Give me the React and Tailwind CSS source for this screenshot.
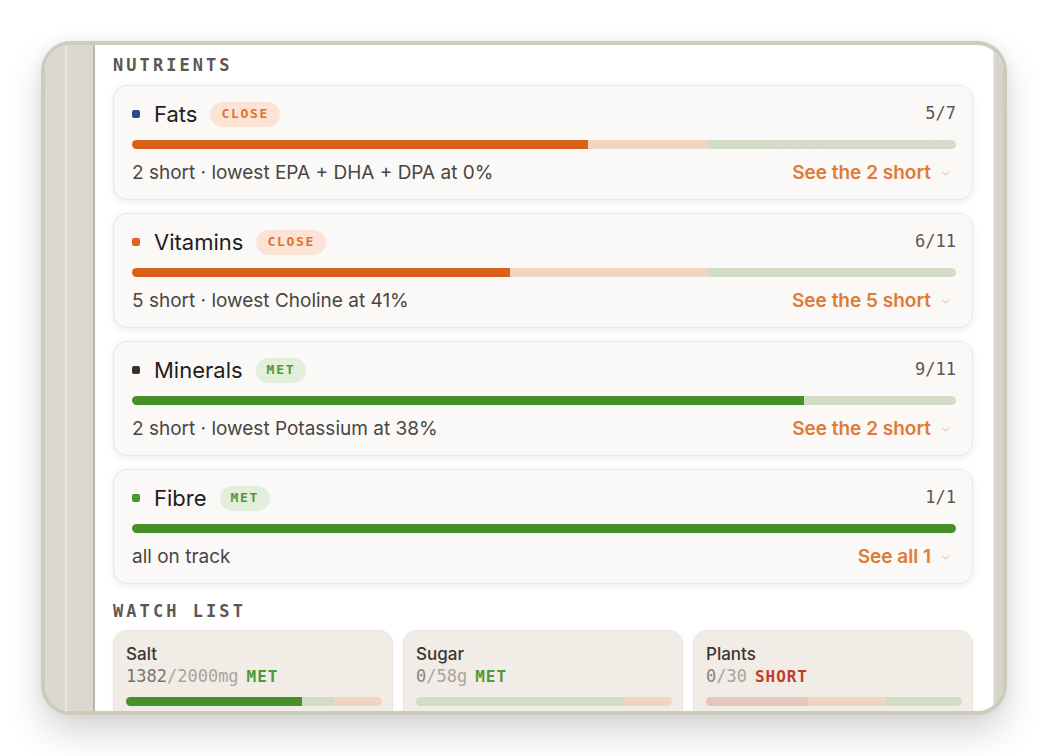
import { ChevronDown } from "lucide-react";

const SANS = "font-['Inter','Noto_Sans',sans-serif]";
const MONO = "font-['DejaVu_Sans_Mono',monospace]";

const ORANGE = "bg-[#d9621b]";
const PEACH = "bg-[#f0d5c3]";
const LGREEN = "bg-[#d3dcc6]";
const GREEN = "bg-[#46902a]";
const PINK = "bg-[#e5c5bf]";
const STRIPE =
  "bg-[repeating-linear-gradient(135deg,#d3dcc6_0px,#d3dcc6_3px,#dcd8d0_3px,#dcd8d0_6px)]";

const nutrients = [
  {
    name: "Fats",
    dot: "bg-[#2d4a8c]",
    badge: "CLOSE",
    count: "5/7",
    segs: [
      { w: 55.3, c: ORANGE },
      { w: 14.6, c: PEACH },
      { w: 7.9, c: LGREEN },
      { w: 22.2, c: STRIPE },
    ],
    note: "2 short · lowest EPA + DHA + DPA at 0%",
    link: "See the 2 short",
  },
  {
    name: "Vitamins",
    dot: "bg-[#e0621a]",
    badge: "CLOSE",
    count: "6/11",
    segs: [
      { w: 45.9, c: ORANGE },
      { w: 24.0, c: PEACH },
      { w: 30.1, c: LGREEN },
    ],
    note: "5 short · lowest Choline at 41%",
    link: "See the 5 short",
  },
  {
    name: "Minerals",
    dot: "bg-[#3a2f29]",
    badge: "MET",
    count: "9/11",
    segs: [
      { w: 81.6, c: GREEN },
      { w: 18.4, c: LGREEN },
    ],
    note: "2 short · lowest Potassium at 38%",
    link: "See the 2 short",
  },
  {
    name: "Fibre",
    dot: "bg-[#4a9a2c]",
    badge: "MET",
    count: "1/1",
    segs: [{ w: 100, c: GREEN }],
    note: "all on track",
    link: "See all 1",
  },
];

const watch = [
  {
    name: "Salt",
    val: "1382",
    rest: "/2000mg",
    status: "MET",
    statusCls: "text-[#4f9a36]",
    valCls: "text-[#7a746d]",
    segs: [
      { w: 68.75, c: GREEN },
      { w: 12.5, c: LGREEN },
      { w: 18.75, c: PEACH },
    ],
  },
  {
    name: "Sugar",
    val: "0",
    rest: "/58g",
    status: "MET",
    statusCls: "text-[#4f9a36]",
    valCls: "text-[#8a847d]",
    segs: [
      { w: 81.25, c: LGREEN },
      { w: 18.75, c: PEACH },
    ],
  },
  {
    name: "Plants",
    val: "0",
    rest: "/30",
    status: "SHORT",
    statusCls: "text-[#bf3b2c]",
    valCls: "text-[#8a847d]",
    segs: [
      { w: 39.8, c: PINK },
      { w: 30.5, c: PEACH },
      { w: 29.7, c: LGREEN },
    ],
  },
];

function Bar({ segs }) {
  return (
    <div className="flex h-[9px] w-full overflow-hidden rounded-full">
      {segs.map((s, i) => (
        <div key={i} className={`h-full ${s.c}`} style={{ width: `${s.w}%` }} />
      ))}
    </div>
  );
}

function Badge({ kind }) {
  const cls =
    kind === "MET"
      ? "bg-[#e3eedb] text-[#4f9a36]"
      : "bg-[#fbe4d5] text-[#e0722e]";
  return (
    <span
      className={`ml-[13px] flex h-[25px] items-center rounded-full px-[11px] ${MONO} text-[13px] font-bold tracking-[0.13em] ${cls}`}
    >
      {kind}
    </span>
  );
}

function NutrientCard({ n }) {
  return (
    <div className="rounded-[14px] border border-[#ebe7e1] bg-[#faf9f7] pb-[14px] pl-[18px] pr-[16px] pt-[15px] shadow-[0_2px_7px_rgba(70,60,45,0.09)]">
      <div className="flex h-[26px] items-center">
        <span className={`h-2 w-2 rounded-[2px] ${n.dot}`} />
        <span className="ml-[14px] text-[22px] leading-none text-[#1f1d1b]">{n.name}</span>
        <Badge kind={n.badge} />
        <span className={`ml-auto ${MONO} text-[17px] text-[#5d5750]`}>{n.count}</span>
      </div>
      <div className="mt-[13px]">
        <Bar segs={n.segs} />
      </div>
      <div className="mt-3 flex h-6 items-center">
        <span className="text-[19px] text-[#4a4541]">{n.note}</span>
        <span className="ml-auto flex items-center gap-[8px] text-[19px] font-semibold text-[#e07a35]">
          {n.link}
          <ChevronDown size={13} strokeWidth={1.5} className="mr-[4px] text-[#e8a57a]" />
        </span>
      </div>
    </div>
  );
}

function WatchCard({ w }) {
  return (
    <div className="rounded-[14px] border border-[#ebe5dd] bg-[#f1ece5] pb-4 pl-[12px] pr-[10px] pt-[13px] shadow-[0_1px_4px_rgba(70,60,45,0.06)]">
      <div className="text-[17px] font-medium leading-5 text-[#3b3732]">{w.name}</div>
      <div className={`mt-[2px] ${MONO} text-[17px] leading-5`}>
        <span className={w.valCls}>{w.val}</span>
        <span className="text-[#aaa49d]">{w.rest}</span>
        <span className={`ml-2 text-[16px] font-bold tracking-[0.06em] ${w.statusCls}`}>{w.status}</span>
      </div>
      <div className="mt-[10px]">
        <Bar segs={w.segs} />
      </div>
    </div>
  );
}

export default function App() {
  return (
    <div className={`min-h-[756px] w-[1048px] bg-white pl-[41px] pt-[41px] ${SANS}`}>
      <div className="h-[674px] w-[966px] overflow-hidden rounded-[30px] border-4 border-[#cbccbc] bg-white shadow-[0_18px_36px_rgba(0,0,0,0.16),0_0_14px_rgba(0,0,0,0.06)]">
        <div className="flex h-full">
          <div className="flex w-[50px] shrink-0 border-r-2 border-[#b9b5ac] bg-[#dcd8cf]">
            <div className="w-[20px]" />
            <div className="w-[2px] bg-[#ebe8e2]" />
            <div className="flex-1" />
          </div>
          <main className="flex-1 overflow-hidden pl-[18px] pr-[20px] pt-[10px]">
            <h2 className={`${MONO} text-[17px] font-bold leading-5 tracking-[0.18em] text-[#5e5750]`}>
              NUTRIENTS
            </h2>
            <div className="mt-[10px] flex flex-col gap-[13px]">
              {nutrients.map((n) => (
                <NutrientCard key={n.name} n={n} />
              ))}
            </div>
            <h2 className={`mt-[17px] ${MONO} text-[17px] font-bold leading-5 tracking-[0.18em] text-[#5e5750]`}>
              WATCH LIST
            </h2>
            <div className="mt-[9px] grid grid-cols-3 gap-[10px]">
              {watch.map((w) => (
                <WatchCard key={w.name} w={w} />
              ))}
            </div>
          </main>
          <div className="w-[10px] shrink-0 border-l-2 border-[#e4e1da] bg-[#d6d3c8]" />
        </div>
      </div>
    </div>
  );
}
